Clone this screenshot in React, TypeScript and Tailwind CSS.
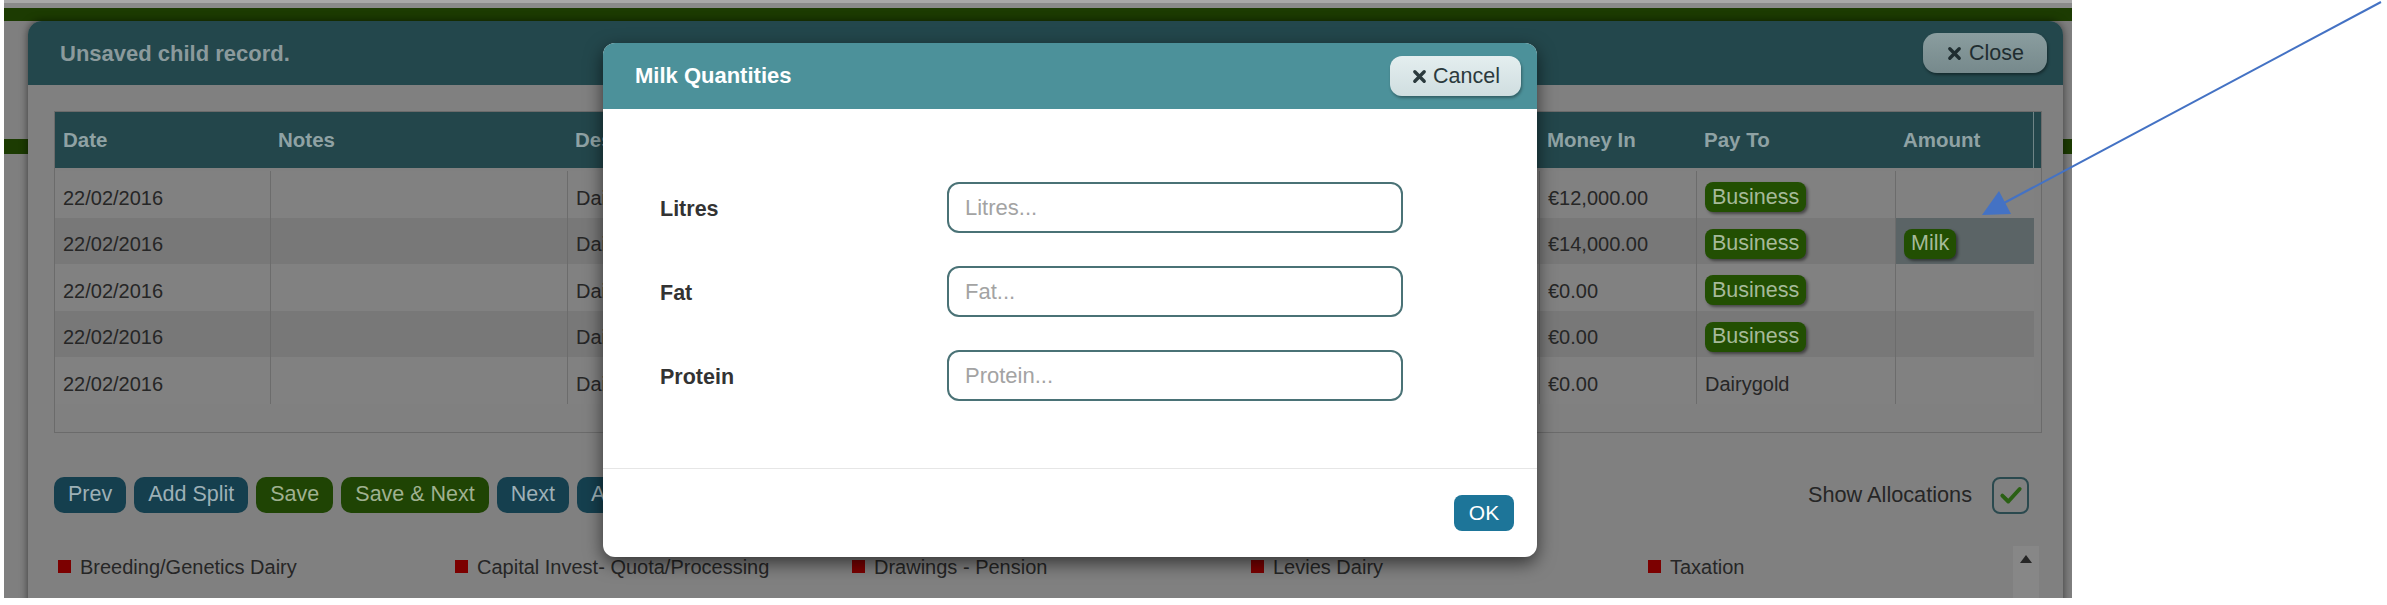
import type { ReactNode } from "react";

const rows = [
  { date: "22/02/2016", desc: "Dairygold Milk", moneyIn: "€12,000.00", payTo: "Business", amount: "" },
  { date: "22/02/2016", desc: "Dairygold Milk", moneyIn: "€14,000.00", payTo: "Business", amount: "Milk" },
  { date: "22/02/2016", desc: "Dairygold Levy", moneyIn: "€0.00", payTo: "Business", amount: "" },
  { date: "22/02/2016", desc: "Dairygold Levy", moneyIn: "€0.00", payTo: "Business", amount: "" },
  { date: "22/02/2016", desc: "Dairygold Shares", moneyIn: "€0.00", payTo: "Dairygold", amount: "" },
];

const legend = [
  "Breeding/Genetics Dairy",
  "Capital Invest- Quota/Processing",
  "Drawings - Pension",
  "Levies Dairy",
  "Taxation",
  "Breeding/Genetics Beef",
  "Car Running Costs",
  "Drawings - Personal Expenses",
  "Machinery Hire",
  "Tractor Repairs",
];

function TimesIcon({ className = "" }: { className?: string }) {
  return (
    <svg viewBox="0 0 16 16" className={className} aria-hidden>
      <path d="M3 3 L13 13 M13 3 L3 13" stroke="currentColor" strokeWidth="3.6" strokeLinecap="round" />
    </svg>
  );
}

function Badge({ children }: { children: ReactNode }) {
  return (
    <span className="inline-flex items-center mt-[6px] h-[30px] px-[7px] rounded-[8px] bg-[#224f02] text-[#a6ba9a] text-[21.5px] leading-none shadow-[2px_2px_3px_rgba(0,0,0,0.45)]">
      {children}
    </span>
  );
}

function Cell({ w, children, className = "", first = false }: { w: string; children?: ReactNode; className?: string; first?: boolean }) {
  return (
    <div className={`${w} h-full flex items-center px-[8px] pt-[7px] ${first ? "" : "border-l border-[#6c6c6c]"} ${className}`}>
      {children}
    </div>
  );
}

function Btn({ children, green = false }: { children: ReactNode; green?: boolean }) {
  return (
    <button
      className={`h-[36px] px-[14px] rounded-[10px] text-[21.5px] leading-none ${
        green ? "bg-[#1f4404] text-[#9fb190]" : "bg-[#153f4e] text-[#9db0b6]"
      }`}
    >
      {children}
    </button>
  );
}

export default function App() {
  return (
    <div className="relative w-[2387px] h-[605px] bg-white overflow-hidden font-['Liberation_Sans',Arial,sans-serif]">
      {/* dimmed page behind the dialogs */}
      <div className="relative ml-[4px] w-[2068px] h-[598px] overflow-hidden bg-[#7f7f7f]">
        <div className="h-[3px] bg-[#a8a8a8]" />
        <div className="h-[5px] bg-[#8a8a8a]" />
        <div className="h-[13px] bg-[#1c3b02]" />
        <div className="h-[118px]" />
        <div className="h-[15px] bg-[#1c3b02]" />

        {/* Unsaved child record dialog */}
        <div className="absolute left-[24px] top-[21px] w-[2035px] h-[640px] rounded-t-[14px] bg-[#808080] shadow-[0_0_8px_rgba(0,0,0,0.55)]">
          <div className="h-[64px] rounded-t-[14px] bg-[#23474c] flex items-center justify-between pl-[32px] pr-[16px]">
            <span className="text-[22px] font-bold text-[#8b9a9c]">Unsaved child record.</span>
            <button className="h-[40px] pl-[24px] pr-[23px] rounded-[14px] flex items-center gap-[7px] bg-gradient-to-b from-[#8a9d9f] to-[#76898c] text-[#1f2d30] text-[21.5px] shadow-[1px_2px_3px_rgba(0,0,0,0.4)]">
              <TimesIcon className="w-[15px] h-[15px]" />
              Close
            </button>
          </div>

          <div className="pl-[26px] pr-[21px] pt-[26px]">
            {/* grid */}
            <div className="h-[322px] border border-[#6b6b6b] flex flex-col">
              <div className="h-[56px] shrink-0 flex bg-[#23464b] text-[20.5px] font-bold text-[#8fa2a4]">
                <div className="w-[215px] flex items-center px-[8px]">Date</div>
                <div className="w-[297px] flex items-center px-[8px]">Notes</div>
                <div className="w-[430px] flex items-center px-[8px]">Description</div>
                <div className="w-[290px] flex items-center px-[8px]">Category</div>
                <div className="w-[252px] flex items-center px-[8px]">Money Out</div>
                <div className="w-[157px] flex items-center px-[8px]">Money In</div>
                <div className="w-[199px] flex items-center px-[8px]">Pay To</div>
                <div className="w-[139px] flex items-center px-[8px] border-r border-[#6f8486]">Amount</div>
                <div className="flex-1" />
              </div>
              <div className="h-[3px] shrink-0" />
              {rows.map((r, i) => (
                <div key={i} className={`h-[46.5px] shrink-0 flex text-[20px] text-[#262626] ${i % 2 ? "bg-[#787878]" : "bg-[#818181]"}`}>
                  <Cell w="w-[215px]" first>{r.date}</Cell>
                  <Cell w="w-[297px]" />
                  <Cell w="w-[430px]">{r.desc}</Cell>
                  <Cell w="w-[290px]">Milk Sales</Cell>
                  <Cell w="w-[252px]">€0.00</Cell>
                  <Cell w="w-[157px]">{r.moneyIn}</Cell>
                  <div className="w-[199px] h-full flex items-center px-[8px] border-l border-[#6c6c6c]">
                    {r.payTo === "Business" ? <Badge>Business</Badge> : <span className="pt-[7px]">{r.payTo}</span>}
                  </div>
                  <div className={`w-[139px] h-full flex items-center px-[8px] border-l border-[#6c6c6c] ${r.amount ? "bg-[#5b6466]" : ""}`}>
                    {r.amount && <Badge>{r.amount}</Badge>}
                  </div>
                  <div className="flex-1 bg-[#808080]" />
                </div>
              ))}
            </div>

            {/* action buttons */}
            <div className="mt-[44px] h-[36px] flex items-center justify-between pr-[13px]">
              <div className="flex items-center gap-[8px]">
                <Btn>Prev</Btn>
                <Btn>Add Split</Btn>
                <Btn green>Save</Btn>
                <Btn green>Save &amp; Next</Btn>
                <Btn>Next</Btn>
                <Btn>Allocate</Btn>
                <Btn>Delete</Btn>
              </div>
              <div className="flex items-center gap-[20px]">
                <span className="text-[21.7px] text-[#262626]">Show Allocations</span>
                <span className="w-[37px] h-[37px] rounded-[8px] border-2 border-[#2a494e] flex items-center justify-center">
                  <svg viewBox="0 0 24 24" className="w-[26px] h-[26px]" aria-hidden>
                    <path d="M4 12.5 L9.5 18 L20 6.5" fill="none" stroke="#2a6014" strokeWidth="3.6" strokeLinecap="round" strokeLinejoin="round" />
                  </svg>
                </span>
              </div>
            </div>

            {/* allocation legend */}
            <div className="relative mt-[33px] h-[90px] pt-[1px]">
              <div className="grid grid-cols-[397px_397px_399px_397px_1fr]">
                {legend.map((l) => (
                  <div key={l} className="h-[39px] flex items-center pl-[4px] text-[20px] text-[#262626]">
                    <span className="w-[13px] h-[13px] bg-[#7c0000] mr-[9px] shrink-0" />
                    {l}
                  </div>
                ))}
              </div>
              <div className="absolute right-[3px] top-0 w-[26px] h-full bg-[#878787] flex justify-center pt-[9px]">
                <span className="w-0 h-0 border-l-[6px] border-r-[6px] border-b-[8px] border-l-transparent border-r-transparent border-b-[#262626]" />
              </div>
            </div>
          </div>
        </div>

        {/* Milk Quantities modal */}
        <div className="absolute left-[599px] top-[43px] w-[934px] h-[514px] rounded-[12px] bg-white overflow-hidden shadow-[0_6px_18px_rgba(0,0,0,0.6)]">
          <div className="h-[66px] bg-[#4c919a] flex items-center justify-between pl-[32px] pr-[16px]">
            <span className="text-[22px] font-bold text-white pb-[2px]">Milk Quantities</span>
            <button className="h-[40px] pl-[22px] pr-[21px] rounded-[12px] flex items-center gap-[6px] bg-gradient-to-b from-[#e4eeef] to-[#d0dee0] text-[#2b3a3d] text-[21.5px] shadow-[1px_2px_3px_rgba(0,0,0,0.35)]">
              <TimesIcon className="w-[15px] h-[15px]" />
              Cancel
            </button>
          </div>
          <div className="pt-[73px] pb-[67px] pl-[57px] flex flex-col gap-[33px]">
            {["Litres", "Fat", "Protein"].map((f) => (
              <div key={f} className="flex items-center h-[51px]">
                <label className="w-[287px] text-[21.5px] font-bold text-[#333333] pt-[4px]">{f}</label>
                <input
                  placeholder={`${f}...`}
                  className="w-[456px] h-[51px] rounded-[12px] border-2 border-[#4a7276] px-[16px] text-[22px] text-[#333] placeholder:text-[#a3a3a3] outline-none"
                />
              </div>
            ))}
          </div>
          <div className="h-[1px] bg-[#e6e6e6]" />
          <div className="h-[87px] flex items-center justify-end pr-[23px]">
            <button className="w-[60px] h-[36px] rounded-[8px] bg-[#1d7599] text-white text-[21px] leading-none">OK</button>
          </div>
        </div>
      </div>

      {/* annotation arrow */}
      <svg className="absolute inset-0 pointer-events-none" width="2387" height="605" aria-hidden>
        <line x1="2381" y1="2" x2="2004" y2="203" stroke="#4472c4" strokeWidth="2" />
        <polygon points="1982,215 1999,191 2011,214" fill="#4472c4" />
      </svg>
    </div>
  );
}
